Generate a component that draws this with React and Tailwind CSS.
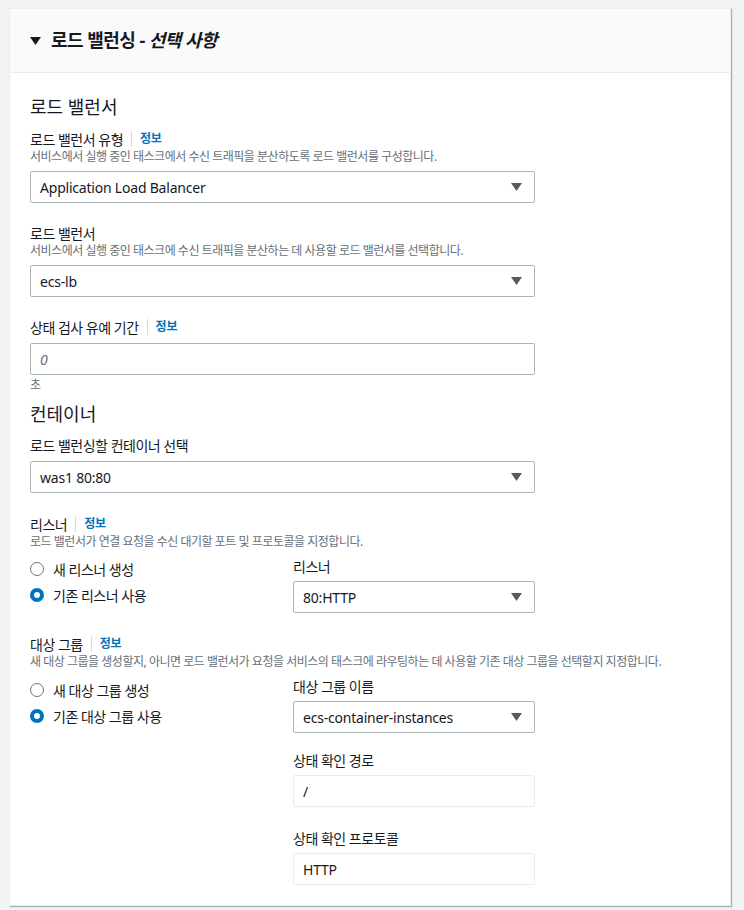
import React from 'react';

const font = { fontFamily: '"Noto Sans", "Noto Sans CJK KR", sans-serif' };

const Info = () => (
    <span className="ml-2 pl-2 h-4 flex items-center border-l border-[#d5dbdb] text-[12px] font-bold tracking-[-0.02em] text-[#0073bb]">정보</span>
);

const Label = ({ children, info, className = '' }) => (
    <div className={`flex items-center h-5 text-[14px] tracking-[-0.035em] text-[#16191f] ${className}`}>
        <span>{children}</span>
        {info && <Info />}
    </div>
);

const Desc = ({ children }) => (
    <p className="h-4 text-[12px] leading-4 tracking-[-0.04em] text-[#687078] whitespace-nowrap">{children}</p>
);

const Caret = () => (
    <svg width="11" height="8" viewBox="0 0 11 8" className="shrink-0">
        <path d="M0 0 L11 0 L5.5 8 Z" fill="#545b64" />
    </svg>
);

const Select = ({ value, className = '' }) => (
    <div className={`flex items-center justify-between h-8 border border-[#aab7b8] rounded-[2px] pl-[9px] pr-[12px] text-[14px] tracking-[-0.015em] text-[#16191f] bg-white ${className}`}>
        <span>{value}</span>
        <Caret />
    </div>
);

const Radio = ({ checked, children }) => (
    <div className="flex items-center h-5 gap-[9px] text-[14px] tracking-[-0.035em] text-[#16191f]">
        {checked ? (
            <span className="w-[14px] h-[14px] rounded-full border-[4px] border-[#0073bb] bg-white" />
        ) : (
            <span className="w-[14px] h-[14px] rounded-full border border-[#687078] bg-white" />
        )}
        <span>{children}</span>
    </div>
);

const App = () => {
    return (
        <div className="min-h-[910px] bg-[#f2f3f3] pt-2 pl-[9px] pr-[13px]" style={font}>
            <div className="bg-white border border-[#eaeded] shadow-[1px_1px_1px_0_rgba(0,28,36,0.3)] w-[722px]">
                {/* Header */}
                <div className="h-[64px] bg-[#fafafa] border-b border-[#eaeded] flex items-center pl-5">
                    <svg width="11" height="8" viewBox="0 0 11 8" className="mr-[10px]">
                        <path d="M0 0 L11 0 L5.5 8 Z" fill="#16191f" />
                    </svg>
                    <h2 className="text-[18px] font-bold tracking-[-0.03em] text-[#16191f]">
                        로드 밸런싱 - <i>선택 사항</i>
                    </h2>
                </div>

                {/* Body */}
                <div className="pl-5 pt-[22px] pb-5">
                    <div className="w-[505px]">
                        <h3 className="text-[18px] leading-6 text-[#16191f]">로드 밸런서</h3>

                        <Label info className="mt-[10px]">로드 밸런서 유형</Label>
                        <Desc>서비스에서 실행 중인 태스크에서 수신 트래픽을 분산하도록 로드 밸런서를 구성합니다.</Desc>
                        <Select value="Application Load Balancer" className="mt-[6px]" />

                        <Label className="mt-5">로드 밸런서</Label>
                        <Desc>서비스에서 실행 중인 태스크에 수신 트래픽을 분산하는 데 사용할 로드 밸런서를 선택합니다.</Desc>
                        <Select value="ecs-lb" className="mt-[6px]" />

                        <Label info className="mt-5">상태 검사 유예 기간</Label>
                        <div className="mt-[6px] h-8 border border-[#aab7b8] rounded-[2px] pl-[9px] flex items-center text-[14px] italic text-[#687078]">0</div>
                        <p className="mt-[2px] h-4 text-[12px] leading-4 text-[#687078]">초</p>

                        <h3 className="mt-[9px] text-[18px] leading-6 text-[#16191f]">컨테이너</h3>

                        <Label className="mt-[9px]">로드 밸런싱할 컨테이너 선택</Label>
                        <Select value="was1 80:80" className="mt-[6px]" />

                        <Label info className="mt-[21px]">리스너</Label>
                        <Desc>로드 밸런서가 연결 요청을 수신 대기할 포트 및 프로토콜을 지정합니다.</Desc>
                        <div className="grid grid-cols-[263px_242px] mt-[6px]">
                            <div className="flex flex-col gap-[6px] pt-[3px]">
                                <Radio>새 리스너 생성</Radio>
                                <Radio checked>기존 리스너 사용</Radio>
                            </div>
                            <div>
                                <Label>리스너</Label>
                                <Select value="80:HTTP" className="mt-[5px]" />
                            </div>
                        </div>

                        <Label info className="mt-[21px]">대상 그룹</Label>
                        <Desc>새 대상 그룹을 생성할지, 아니면 로드 밸런서가 요청을 서비스의 태스크에 라우팅하는 데 사용할 기존 대상 그룹을 선택할지 지정합니다.</Desc>
                        <div className="grid grid-cols-[263px_242px] mt-[6px]">
                            <div className="flex flex-col gap-[6px] pt-[4px]">
                                <Radio>새 대상 그룹 생성</Radio>
                                <Radio checked>기존 대상 그룹 사용</Radio>
                            </div>
                            <div>
                                <Label>대상 그룹 이름</Label>
                                <Select value="ecs-container-instances" className="mt-[5px]" />

                                <Label className="mt-[17px]">상태 확인 경로</Label>
                                <div className="mt-[5px] h-8 border border-[#eaeded] rounded-[2px] pl-[9px] flex items-center text-[14px] text-[#16191f]">/</div>

                                <Label className="mt-[21px]">상태 확인 프로토콜</Label>
                                <div className="mt-[5px] h-8 border border-[#eaeded] rounded-[2px] pl-[9px] flex items-center text-[14px] tracking-[-0.015em] text-[#16191f]">HTTP</div>
                            </div>
                        </div>
                    </div>
                </div>
            </div>
        </div>
    );
};

export default App;
